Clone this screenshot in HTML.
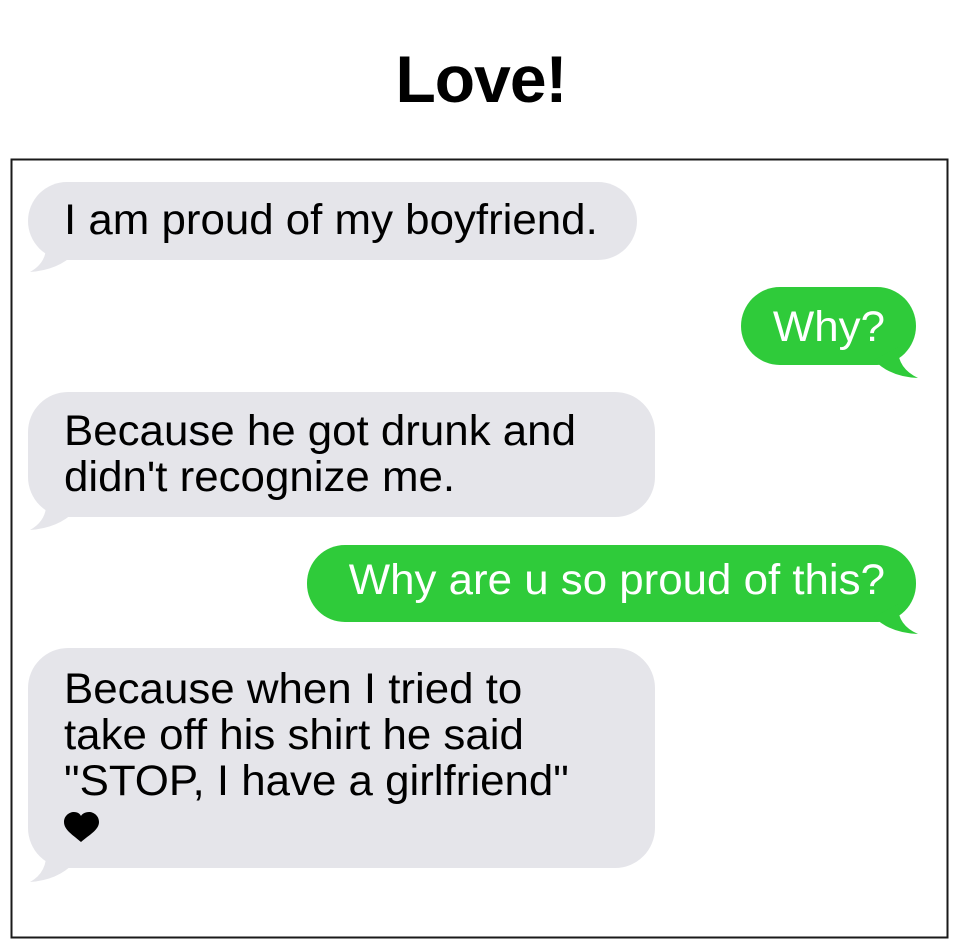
<!DOCTYPE html>
<html><head><meta charset="utf-8"><style>
html,body{margin:0;padding:0;background:#fff;width:960px;height:944px;overflow:hidden}
svg{display:block}
text{font-family:"Liberation Sans",Arial,sans-serif}
</style></head><body>
<svg width="960" height="944" viewBox="0 0 960 944" xmlns="http://www.w3.org/2000/svg">
<text x="481" y="102" text-anchor="middle" font-size="66" font-weight="bold" letter-spacing="-1" fill="#000">Love!</text>
<rect x="11.5" y="159.5" width="936" height="778" fill="none" stroke="#1a1a1a" stroke-width="2"/>

<g fill="#e5e5ea">
  <rect x="28" y="182" width="609" height="78" rx="39"/>
  <path d="M46 242 Q48 262 30 272 Q58 270 74 254 Z"/>
  <rect x="28" y="392" width="627" height="125" rx="40"/>
  <path d="M46 500 Q48 520 30 530 Q58 528 74 512 Z"/>
  <rect x="28" y="648" width="627" height="220" rx="40"/>
  <path d="M46 850 Q48 872 30 882 Q58 880 74 863 Z"/>
</g>
<g fill="#2fcb3a">
  <rect x="741" y="287" width="175" height="78" rx="39"/>
  <path d="M898 347 Q897 368 918 378 Q890 377 874 360 Z"/>
  <rect x="307" y="545" width="609" height="77" rx="38"/>
  <path d="M898 604 Q897 625 918 634 Q890 633 874 617 Z"/>
</g>

<g font-size="43" fill="#000">
  <text transform="translate(64,234) scale(1.02,1)">I am proud of my boyfriend.</text>
  <text transform="translate(64,445) scale(1.02,1)">Because he got drunk and</text>
  <text transform="translate(64,491) scale(1.02,1)">didn't recognize me.</text>
  <text transform="translate(64,703) scale(1.02,1)">Because when I tried to</text>
  <text transform="translate(64,749) scale(1.02,1)">take off his shirt he said</text>
  <text transform="translate(64,795) scale(1.02,1)">"STOP, I have a girlfriend"</text>
</g>
<g font-size="43" fill="#fff">
  <text transform="translate(885,341) scale(1.02,1)" text-anchor="end">Why?</text>
  <text transform="translate(885,594) scale(1.02,1)" text-anchor="end">Why are u so proud of this?</text>
</g>
<path d="M81 842 C73 835 64 830 64 822 C64 816 69 812 74 812 C78 812 80 814 81 816 C82 814 85 812 89 812 C94 812 99 816 99 822 C99 830 89 835 81 842 Z" fill="#000"/>
</svg>
</body></html>
